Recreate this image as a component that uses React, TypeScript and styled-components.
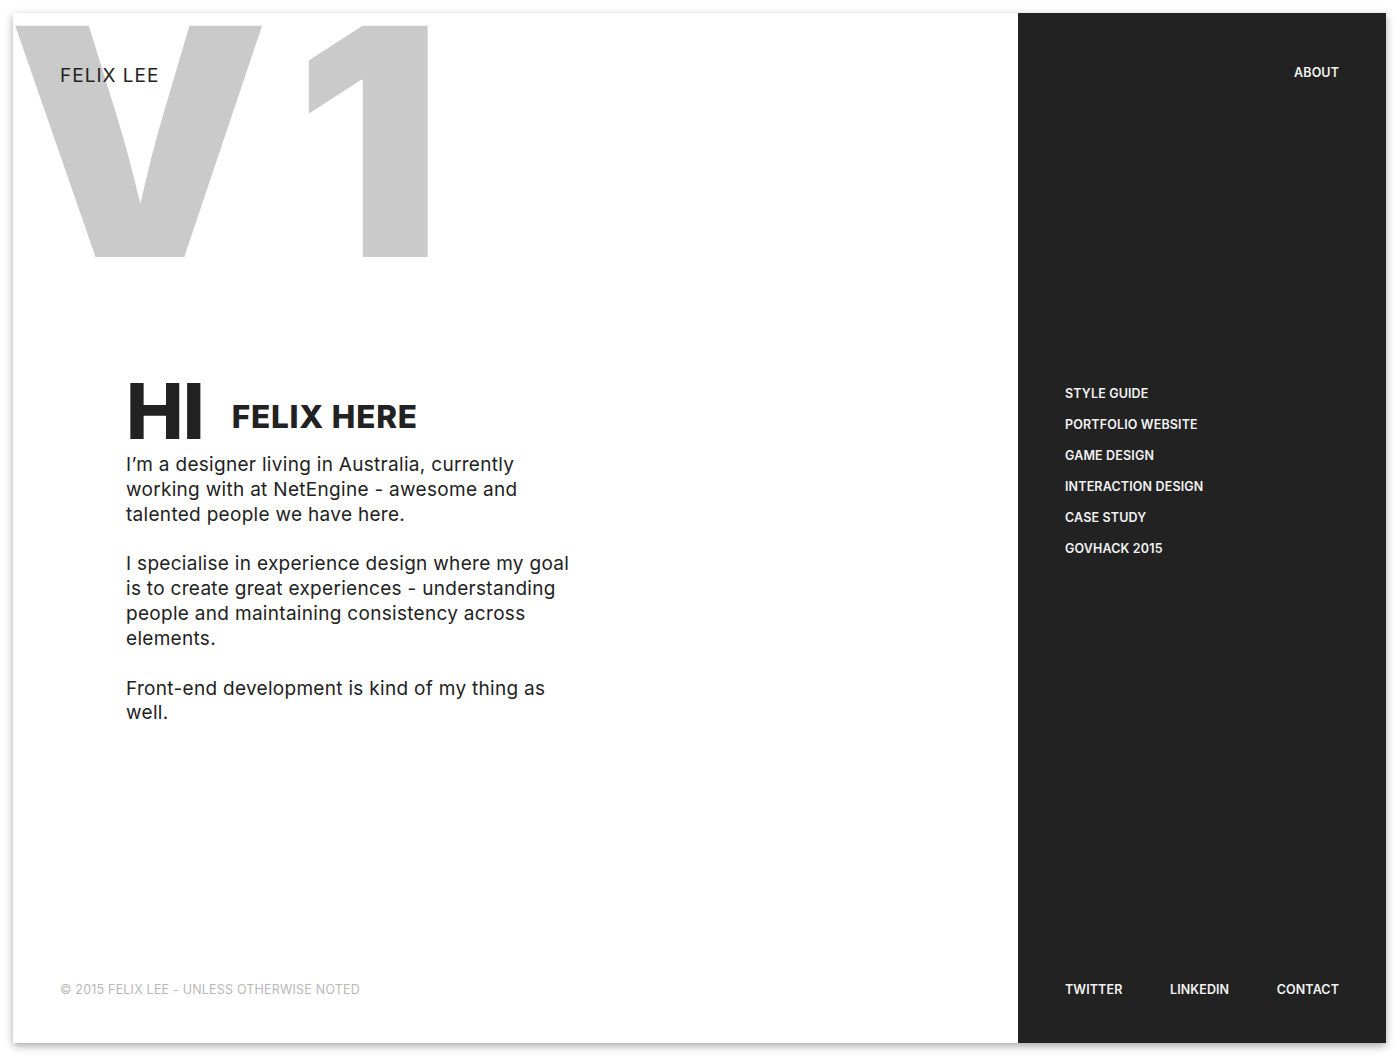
import React from "react";
import styled, { createGlobalStyle } from "styled-components";

const Global = createGlobalStyle`
  html, body {
    margin: 0;
    padding: 0;
    background: #ffffff;
  }
  body {
    font-family: Inter, "Liberation Sans", sans-serif;
    color: #222222;
    -webkit-font-smoothing: antialiased;
  }
  * { box-sizing: border-box; }
`;

const Page = styled.div`
  padding: 13px 14px 14px 13px;
`;

const Card = styled.div`
  width: 1373px;
  height: 1030px;
  display: flex;
  background: #ffffff;
  box-shadow: 0 3px 8px rgba(0, 0, 0, 0.35);
`;

const Main = styled.main`
  position: relative;
  flex: 1;
  overflow: hidden;
  display: flex;
  flex-direction: column;
  padding: 0 0 0 47px;
`;

const Mark = styled.div`
  position: absolute;
  left: -5px;
  top: 10px;
  font-family: Inter, "Liberation Sans", sans-serif;
  font-weight: 900;
  font-size: 318px;
  line-height: 0.75;
  letter-spacing: 24px;
  color: #cacaca;
  transform: scaleX(1.035);
  transform-origin: 5px 0;
  user-select: none;
  pointer-events: none;
`;

const Brand = styled.div`
  position: relative;
  padding-top: 51px;
  font-size: 19px;
  line-height: 23px;
  letter-spacing: 1px;
  color: #222222;
`;

const Intro = styled.section`
  position: relative;
  margin-top: 286px;
  padding-left: 66px;
  width: 522px;
`;

const Greeting = styled.h1`
  margin: 0 0 3px;
  display: flex;
  align-items: flex-end;
  gap: 28px;
  font-weight: 800;
`;

const Hi = styled.span`
  font-size: 77px;
  line-height: 1;
  letter-spacing: -1px;
`;

const Sub = styled.span`
  font-size: 31.5px;
  line-height: 1;
  margin-bottom: 18px;
  letter-spacing: 0.8px;
`;

const Para = styled.p`
  margin: 0 0 25px;
  font-size: 19px;
  line-height: 24.8px;
  letter-spacing: 0.3px;
  color: #222222;
`;

const Footer = styled.footer`
  margin-top: auto;
  padding-bottom: 45px;
  font-size: 12.5px;
  line-height: 16px;
  color: #b8b8b8;
  letter-spacing: 0.2px;
`;

const Aside = styled.aside`
  width: 368px;
  background: #222222;
  display: flex;
  flex-direction: column;
  padding: 52px 47px 45px;
  color: #f2f2f2;
`;

const NavLink = styled.a`
  color: #f2f2f2;
  text-decoration: none;
  font-size: 12.5px;
  font-weight: 600;
  line-height: 16px;
  letter-spacing: 0.1px;
`;

const Top = styled.div`
  display: flex;
  justify-content: flex-end;
`;

const Menu = styled.nav`
  margin-top: 305px;
  display: flex;
  flex-direction: column;
  gap: 15px;
  & > a {
    letter-spacing: 0.15px;
  }
`;

const Social = styled.div`
  margin-top: auto;
  display: flex;
  justify-content: space-between;
`;

const menu = [
  "STYLE GUIDE",
  "PORTFOLIO WEBSITE",
  "GAME DESIGN",
  "INTERACTION DESIGN",
  "CASE STUDY",
  "GOVHACK 2015",
];

export default function App() {
  return (
    <Page>
      <Global />
      <Card>
        <Main>
          <Mark aria-hidden>V1</Mark>
          <Brand>FELIX LEE</Brand>
          <Intro>
            <Greeting>
              <Hi>HI</Hi>
              <Sub>FELIX HERE</Sub>
            </Greeting>
            <Para>
              I’m a designer living in Australia, currently working with at
              NetEngine - awesome and talented people we have here.
            </Para>
            <Para>
              I specialise in experience design where my goal is to create
              great experiences - understanding people and maintaining
              consistency across elements.
            </Para>
            <Para>Front-end development is kind of my thing as well.</Para>
          </Intro>
          <Footer>© 2015 FELIX LEE - UNLESS OTHERWISE NOTED</Footer>
        </Main>
        <Aside>
          <Top>
            <NavLink href="#">ABOUT</NavLink>
          </Top>
          <Menu>
            {menu.map((m) => (
              <NavLink key={m} href="#">
                {m}
              </NavLink>
            ))}
          </Menu>
          <Social>
            <NavLink href="#">TWITTER</NavLink>
            <NavLink href="#">LINKEDIN</NavLink>
            <NavLink href="#">CONTACT</NavLink>
          </Social>
        </Aside>
      </Card>
    </Page>
  );
}
